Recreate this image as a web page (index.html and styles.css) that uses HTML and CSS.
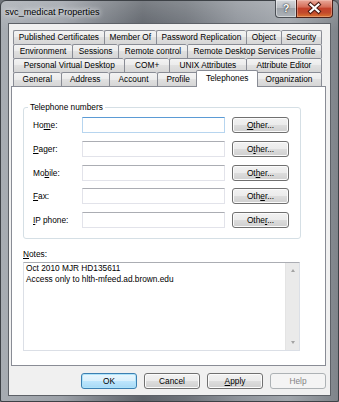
FILE: index.html
```html
<!DOCTYPE html>
<html lang="en">

<head>
    <meta charset="UTF-8">
    <title>svc_medicat Properties</title>
    <link rel="stylesheet" href="styles.css">
</head>

<body>

    <div class="window">
        <div class="titlebar">
            <span class="title">svc_medicat Properties</span>
            <div class="caption-buttons">
                <span class="cap-help">?</span>
                <span class="cap-close">
                    <svg width="37" height="18" viewBox="0 0 37 18">
                        <path d="M14.5 5.5 L22.5 12.5 M22.5 5.5 L14.5 12.5" stroke="#4a1a12" stroke-width="4.2" stroke-linecap="square" fill="none" />
                        <path d="M14.5 5.5 L22.5 12.5 M22.5 5.5 L14.5 12.5" stroke="#fff" stroke-width="2.2" stroke-linecap="square" fill="none" />
                    </svg>
                </span>
            </div>
        </div>

        <div class="client">
            <div class="tabs">
                <div class="tab-row">
                    <span class="tab">Published Certificates</span>
                    <span class="tab">Member Of</span>
                    <span class="tab">Password Replication</span>
                    <span class="tab">Object</span>
                    <span class="tab">Security</span>
                </div>
                <div class="tab-row">
                    <span class="tab">Environment</span>
                    <span class="tab">Sessions</span>
                    <span class="tab">Remote control</span>
                    <span class="tab">Remote Desktop Services Profile</span>
                </div>
                <div class="tab-row">
                    <span class="tab">Personal Virtual Desktop</span>
                    <span class="tab">COM+</span>
                    <span class="tab">UNIX Attributes</span>
                    <span class="tab">Attribute Editor</span>
                </div>
                <div class="tab-row">
                    <span class="tab">General</span>
                    <span class="tab">Address</span>
                    <span class="tab">Account</span>
                    <span class="tab">Profile</span>
                    <span class="tab tab-active">Telephones</span>
                    <span class="tab">Organization</span>
                </div>
            </div>

            <div class="panel">
                <div class="group">
                    <span class="group-title">Telephone numbers</span>
                    <div class="phone-row">
                        <span class="label">Ho<u>m</u>e:</span>
                        <span class="field field-focus"></span>
                        <span class="button other"><u>O</u>ther...</span>
                    </div>
                    <div class="phone-row">
                        <span class="label"><u>P</u>ager:</span>
                        <span class="field"></span>
                        <span class="button other">O<u>t</u>her...</span>
                    </div>
                    <div class="phone-row">
                        <span class="label">Mo<u>b</u>ile:</span>
                        <span class="field"></span>
                        <span class="button other">Ot<u>h</u>er...</span>
                    </div>
                    <div class="phone-row">
                        <span class="label"><u>F</u>ax:</span>
                        <span class="field"></span>
                        <span class="button other">Oth<u>e</u>r...</span>
                    </div>
                    <div class="phone-row">
                        <span class="label"><u>I</u>P phone:</span>
                        <span class="field"></span>
                        <span class="button other">Othe<u>r</u>...</span>
                    </div>
                </div>

                <div class="notes-label"><u>N</u>otes:</div>
                <div class="notes">
                    <div class="notes-text">Oct 2010 MJR HD135611<br>Access only to hlth-mfeed.ad.brown.edu</div>
                    <div class="scrollbar">
                        <span class="arrow arrow-up"></span>
                        <span class="arrow arrow-down"></span>
                    </div>
                </div>
            </div>

            <div class="actions">
                <span class="button default">OK</span>
                <span class="button">Cancel</span>
                <span class="button"><u>A</u>pply</span>
                <span class="button disabled">Help</span>
            </div>
        </div>
    </div>

</body>

</html>
```

FILE: styles.css
```css
* {
    box-sizing: border-box;
}

html,
body {
    margin: 0;
    padding: 0;
}

body {
    font-family: "Liberation Sans", Arial, sans-serif;
    font-size: 8.3px;
    color: #000;
    background: #6f747a;
}

u {
    text-decoration: underline;
    text-underline-offset: 1px;
}

/* window frame */

.window {
    width: 339px;
    height: 402px;
    display: flex;
    flex-direction: column;
    border: 1px solid #3d4146;
    border-radius: 6px 6px 2px 2px;
    background:
        linear-gradient(180deg, rgba(255, 255, 255, 0.18), rgba(255, 255, 255, 0) 30px),
        linear-gradient(90deg, #a7acb2 0%, #9ca1a8 18%, #7b8087 30%, #5f646b 42%, #6e737a 55%, #8e939a 70%, #a0a5ab 85%, #7f848a 100%);
}

.titlebar {
    height: 22px;
    display: flex;
    align-items: flex-start;
}

.title {
    flex: 1;
    padding: 5px 0 0 4px;
    font-size: 9.1px;
    line-height: 12px;
    color: #000;
    text-shadow: 0 0 4px #e8eaec, 0 0 6px #e8eaec;
}

.caption-buttons {
    display: flex;
    margin-right: 5px;
    margin-top: -1px;
}

.cap-help {
    width: 21px;
    height: 18px;
    border: 1px solid #4b4f55;
    border-top: 0;
    border-right: 0;
    border-radius: 0 0 0 4px;
    background: linear-gradient(180deg, #d4d7db 0%, #b9bdc2 45%, #9da2a8 50%, #aeb3b8 100%);
    box-shadow: inset 0 0 0 1px rgba(255, 255, 255, 0.45);
    text-align: center;
    font-weight: bold;
    font-size: 11px;
    line-height: 17px;
    color: #fff;
    text-shadow: 0 0 1px #222, 0 0 2px #333;
}

.cap-close {
    width: 37px;
    height: 18px;
    border: 1px solid #4a1f18;
    border-top: 0;
    border-radius: 0 0 4px 0;
    background: linear-gradient(180deg, #e9a99a 0%, #d66f5a 40%, #c3412a 50%, #c24a2c 75%, #d9752f 100%);
    box-shadow: inset 0 0 0 1px rgba(255, 220, 210, 0.35);
}

.cap-close svg {
    display: block;
    margin: -1px 0 0 -1px;
}

/* client area */

.client {
    height: 373px;
    margin: 0 7px 0 7px;
    border: 1px solid #5d6167;
    background: #f0f0f0;
    display: flex;
    flex-direction: column;
    padding: 6px 4px 0 2px;
}

.tabs {
    padding: 0 4px 0 2px;
}

.tab-row {
    display: flex;
    height: 14px;
}

.tab {
    flex: 1 1 auto;
    height: 14px;
    border: 1px solid #898c95;
    border-bottom: 0;
    border-right: 0;
    border-radius: 2px 2px 0 0;
    background: linear-gradient(180deg, #f3f3f3 0%, #ebebeb 50%, #e0e0e0 50%, #d6d6d6 100%);
    text-align: center;
    line-height: 13px;
    white-space: nowrap;
}

.tab:last-child {
    border-right: 1px solid #898c95;
}

.tab-active {
    position: relative;
    z-index: 1;
    height: 17px;
    margin: -2px -2px -1px -2px;
    border-right: 1px solid #898c95;
    background: #fff;
    line-height: 14px;
}

.panel {
    height: 280px;
    border: 1px solid #898c95;
    background: #fff;
    padding: 20px 0 0 11px;
}

.group {
    width: 278px;
    border: 1px solid #d5dfe5;
    border-radius: 3px;
    padding: 0 11px 10px 9px;
    display: flex;
    flex-direction: column;
    gap: 7.75px;
}

.group-title {
    align-self: flex-start;
    margin: -6px 0 -2.75px -5px;
    padding: 0 2px;
    line-height: 10px;
    background: #fff;
}

.phone-row {
    display: flex;
    align-items: center;
    height: 16px;
}

.label {
    width: 49px;
}

.field {
    width: 143px;
    height: 16px;
    margin-right: 7px;
    border: 1px solid #e2e3ea;
    border-top-color: #abadb3;
}

.field-focus {
    border-color: #b7d5ef;
    border-top-color: #5b9bd5;
}

/* buttons */

.button {
    width: 56px;
    height: 16px;
    border: 1px solid #707070;
    border-radius: 3px;
    background: linear-gradient(180deg, #f2f2f2 0%, #ebebeb 50%, #dddddd 50%, #cfcfcf 100%);
    box-shadow: inset 0 0 0 1px #fbfbfb;
    text-align: center;
    line-height: 14px;
}

.button.other {
    width: 57px;
}

.button.default {
    border-color: #3c7fb1;
    background: linear-gradient(180deg, #eaf6fd 0%, #d9f0fc 50%, #bee6fd 50%, #a7d9f5 100%);
    box-shadow: inset 0 0 0 1px #aee3fa;
}

.button.disabled {
    border-color: #adb2b5;
    background: #f4f4f4;
    box-shadow: none;
    color: #838383;
}

/* notes */

.notes-label {
    margin-top: 10px;
    line-height: 10px;
}

.notes {
    width: 277px;
    height: 89px;
    margin-top: 3px;
    display: flex;
    border: 1px solid #dbdfe6;
    border-top-color: #abadb3;
}

.notes-text {
    flex: 1;
    padding: 0 2px;
    line-height: 11px;
}

.scrollbar {
    width: 14px;
    background: #eaeaea;
    border-left: 1px solid #e4e4e4;
    display: flex;
    flex-direction: column;
    justify-content: space-between;
    align-items: center;
    padding: 6px 0 6px;
}

.arrow {
    width: 0;
    height: 0;
    border-left: 2.5px solid transparent;
    border-right: 2.5px solid transparent;
}

.arrow-up {
    border-bottom: 3px solid #a3a3a3;
}

.arrow-down {
    border-top: 3px solid #a3a3a3;
}

.actions {
    display: flex;
    justify-content: flex-end;
    gap: 7px;
    margin-top: 7px;
}
```
